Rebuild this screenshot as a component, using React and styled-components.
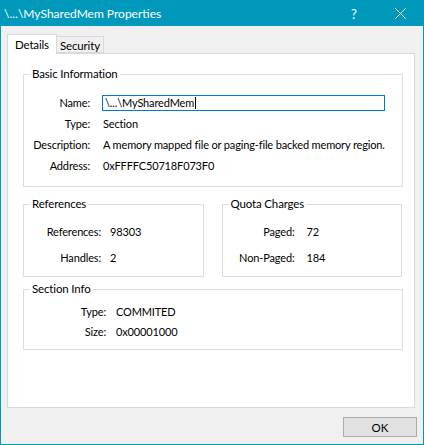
import React from 'react'
import styled, { createGlobalStyle } from 'styled-components'

const GlobalStyle = createGlobalStyle`
  html, body {
    margin: 0;
    padding: 0;
    background: #ffffff;
  }
  body {
    font-family: "Lato", "Noto Sans", sans-serif;
    font-size: 11px;
    letter-spacing: -0.15px;
    color: #000000;
  }
  * {
    box-sizing: border-box;
  }
`

const Window = styled.div`
  width: 424px;
  height: 445px;
  border: 1px solid #0099bc;
  background: #f0f0f0;
  display: flex;
  flex-direction: column;
`

const TitleBar = styled.div`
  height: 25px;
  flex: none;
  background: #0099bc;
  color: #ffffff;
  display: flex;
  align-items: center;
  padding-left: 3px;
  font-size: 12px;
  letter-spacing: 0;
`

const TitleText = styled.div`
  flex: 1;
`

const TitleButton = styled.div`
  width: 46px;
  height: 25px;
  display: flex;
  align-items: center;
  justify-content: center;
  font-size: 13px;
`

const Body = styled.div`
  flex: 1;
  display: flex;
  flex-direction: column;
  padding: 7px 8px 0 6px;
`

const TabStrip = styled.div`
  display: flex;
  align-items: flex-end;
  height: 20px;
  position: relative;
  z-index: 1;
`

const Tab = styled.div`
  height: ${({ $active }) => ($active ? '20px' : '17px')};
  padding: 0 ${({ $active }) => ($active ? '7px' : '3px')};
  background: ${({ $active }) => ($active ? '#ffffff' : '#f0f0f0')};
  border: 1px solid #d9d9d9;
  border-bottom: ${({ $active }) => ($active ? 'none' : '1px solid #d9d9d9')};
  border-left: ${({ $first }) => ($first ? '1px solid #d9d9d9' : 'none')};
  margin-bottom: ${({ $active }) => ($active ? '-1px' : '0')};
  display: flex;
  align-items: center;
  font-size: 11.5px;
  padding-top: ${({ $active }) => ($active ? '0' : '1px')};
`

const TabPage = styled.div`
  height: 355px;
  background: #ffffff;
  border: 1px solid #d9d9d9;
  padding: 12px 11px 0 15px;
  display: flex;
  flex-direction: column;
`

const Group = styled.fieldset`
  margin: ${({ $mt }) => $mt || 0}px 0 0 0;
  padding: 0;
  border: 1px solid #dcdcdc;
  min-width: 0;
  flex: ${({ $grow }) => ($grow ? 1 : 'none')};
`

const Legend = styled.legend`
  margin-left: 6px;
  padding: 0 2px;
  line-height: 16px;
  font-size: 11.5px;
`

const Fields = styled.div`
  display: grid;
  grid-template-columns: ${({ $label }) => $label}px 1fr;
  column-gap: ${({ $gap }) => $gap}px;
  grid-auto-rows: ${({ $row }) => $row}px;
  row-gap: ${({ $rowGap }) => $rowGap || 0}px;
  align-items: center;
  padding: ${({ $pt }) => $pt}px 0 ${({ $pb }) => $pb}px 0;
`

const Label = styled.div`
  text-align: right;
  white-space: nowrap;
`

const Value = styled.div`
  white-space: nowrap;
`

const TextBox = styled.div`
  height: 16px;
  margin-left: -1px;
  width: 283px;
  border: 1px solid #0078d7;
  padding-left: 2px;
  display: flex;
  align-items: center;
  white-space: nowrap;
`

const Caret = styled.span`
  display: inline-block;
  width: 1px;
  height: 12px;
  background: #000000;
  margin-left: 1px;
`

const GroupRow = styled.div`
  display: flex;
  gap: 18px;
  margin-top: 9px;
  padding-right: 1px;
`

const Footer = styled.div`
  display: flex;
  justify-content: flex-end;
  padding-top: 9px;
  margin-right: -2px;
`

const Button = styled.button`
  width: 74px;
  height: 20px;
  background: #e1e1e1;
  border: 1px solid #adadad;
  font-family: inherit;
  font-size: 11.5px;
  padding: 0;
  color: #000000;
`

const CloseIcon = () => (
  <svg width="11" height="11" viewBox="0 0 11 11">
    <path d="M0.5 0.5 L10.5 10.5 M10.5 0.5 L0.5 10.5" stroke="#ffffff" strokeWidth="1" fill="none" />
  </svg>
)

const App = () => {
  return (
    <>
      <GlobalStyle />
      <Window>
        <TitleBar>
          <TitleText>\...\MySharedMem Properties</TitleText>
          <TitleButton>?</TitleButton>
          <TitleButton>
            <CloseIcon />
          </TitleButton>
        </TitleBar>
        <Body>
          <TabStrip>
            <Tab $active $first>Details</Tab>
            <Tab>Security</Tab>
          </TabStrip>
          <TabPage>
            <Group>
              <Legend>Basic Information</Legend>
              <Fields $label={66} $gap={13} $row={21} $pt={10} $pb={10}>
                <Label>Name:</Label>
                <TextBox>
                  \...\MySharedMem
                  <Caret />
                </TextBox>
                <Label>Type:</Label>
                <Value>Section</Value>
                <Label>Description:</Label>
                <Value>A memory mapped file or paging-file backed memory region.</Value>
                <Label>Address:</Label>
                <Value>0xFFFFC50718F073F0</Value>
              </Fields>
            </Group>
            <GroupRow>
              <Group $grow>
                <Legend>References</Legend>
                <Fields $label={77} $gap={9} $row={20} $rowGap={6} $pt={9} $pb={9}>
                  <Label>References:</Label>
                  <Value>98303</Value>
                  <Label>Handles:</Label>
                  <Value>2</Value>
                </Fields>
              </Group>
              <Group $grow>
                <Legend>Quota Charges</Legend>
                <Fields $label={72} $gap={12} $row={20} $rowGap={6} $pt={9} $pb={9}>
                  <Label>Paged:</Label>
                  <Value>72</Value>
                  <Label>Non-Paged:</Label>
                  <Value>184</Value>
                </Fields>
              </Group>
            </GroupRow>
            <Group $mt={4}>
              <Legend>Section Info</Legend>
              <Fields $label={82} $gap={10} $row={20} $pt={4} $pb={8}>
                <Label>Type:</Label>
                <Value>COMMITED</Value>
                <Label>Size:</Label>
                <Value>0x00001000</Value>
              </Fields>
            </Group>
          </TabPage>
          <Footer>
            <Button>OK</Button>
          </Footer>
        </Body>
      </Window>
    </>
  )
}

export default App
